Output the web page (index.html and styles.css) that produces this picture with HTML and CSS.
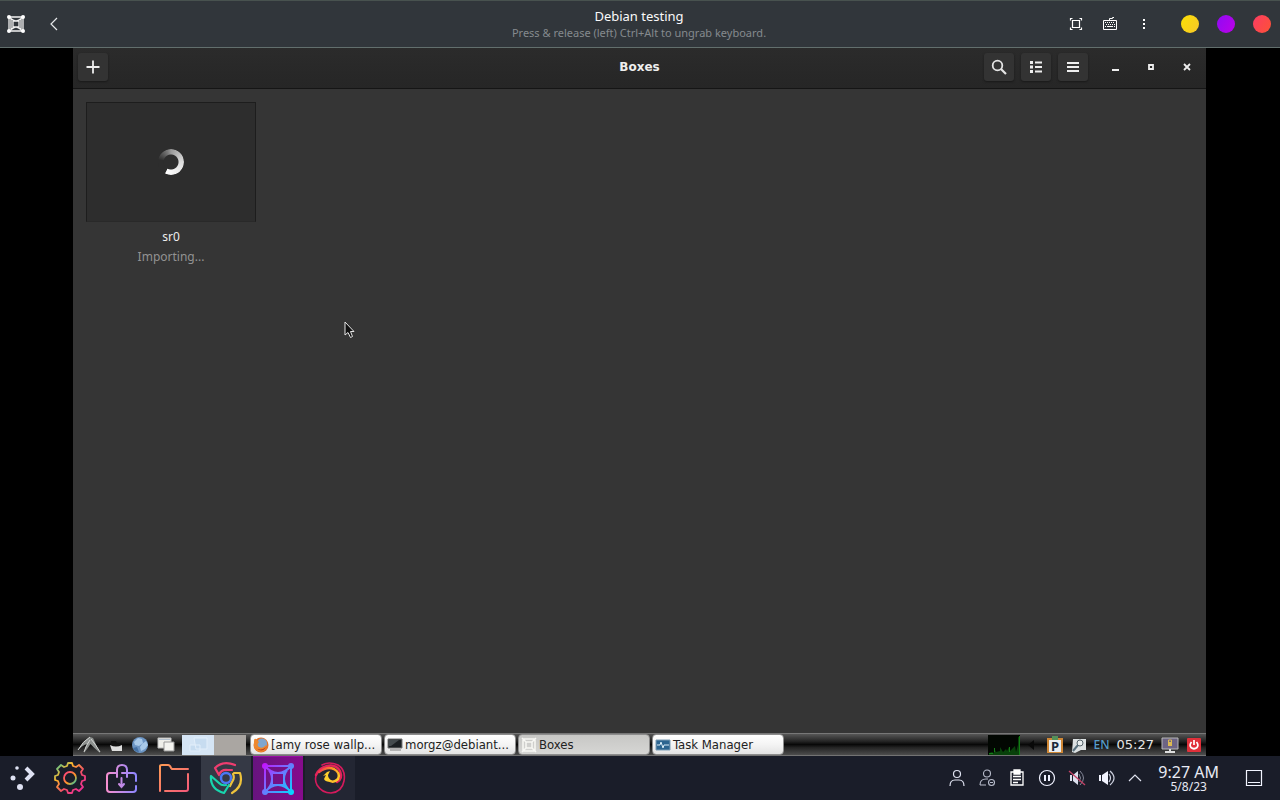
FILE: index.html
```html
<!DOCTYPE html>
<html lang="en">
<head>
<meta charset="utf-8">
<title>Debian testing</title>
<link rel="stylesheet" href="styles.css">
</head>
<body>
<header class="titlebar">
  <div class="title-start">
    <svg class="app-icon" width="18" height="18" viewBox="0 0 18 18" fill="none" stroke="#f2f2f2" stroke-width="1.3"><path d="M2 2H16V16H2ZM6 6H12V12H6ZM2 2Q7 6 9 6Q11 6 16 2M2 16Q7 12 9 12Q11 12 16 16M4 3V15M14 3V15"/><g fill="#fff" stroke="none"><circle cx="2" cy="2" r="2"/><circle cx="16" cy="2" r="2"/><circle cx="2" cy="16" r="2"/><circle cx="16" cy="16" r="2"/></g></svg>
    <button class="icon-btn" aria-label="Back"><svg width="16" height="16" viewBox="0 0 16 16" fill="none" stroke="#e6e8ea" stroke-width="1.2"><path d="M11 2L5 8L11 14"/></svg></button>
  </div>
  <div class="title-text">
    <h1 class="title">Debian testing</h1>
    <p class="subtitle">Press &amp; release (left) Ctrl+Alt to ungrab keyboard.</p>
  </div>
  <div class="title-end">
    <button class="icon-btn" aria-label="Fullscreen"><svg width="16" height="16" viewBox="0 0 16 16" fill="none" stroke="#fff"><path d="M4.500 4.500H11.500V11.500H4.500ZM2.500 4.500V2.500H4.500M11.500 2.500H13.500V4.500M13.500 11.500V13.500H11.500M4.500 13.500H2.500V11.500" stroke-width="1.200"/></svg></button>
    <button class="icon-btn" aria-label="Keyboard"><svg width="16" height="16" viewBox="0 0 16 16" fill="none" stroke="#fff"><path d="M1.500 4.500H14.500V13.500H1.500ZM7.500 4V2.500H10.500V1.500H12"/><path d="M3 6.500H13M4 8.500H13" stroke-dasharray="1 1"/><path d="M3 10.500H4M5 10.500H11M12 10.500H13"/></svg></button>
    <button class="icon-btn" aria-label="More"><svg width="16" height="16" viewBox="0 0 16 16" fill="#fff"><path d="M7 3H9V5H7ZM7 7H9V9H7ZM7 11H9V13H7Z"/></svg></button>
    <div class="window-dots">
      <button class="dot dot-yellow" aria-label="Minimize"></button>
      <button class="dot dot-purple" aria-label="Maximize"></button>
      <button class="dot dot-red" aria-label="Close"></button>
    </div>
  </div>
</header>

<main class="viewer">
  <section class="guest">
    <header class="guest-bar">
      <div class="guest-start">
        <button class="gbtn" aria-label="New box"><svg width="16" height="16" viewBox="0 0 16 16" stroke="#eee" stroke-width="1.800"><path d="M8 1.500V14.500M1.500 8H14.500"/></svg></button>
      </div>
      <h2 class="guest-title">Boxes</h2>
      <div class="guest-end">
        <div class="gbtns">
          <button class="gbtn" aria-label="Search"><svg width="16" height="16" viewBox="0 0 16 16" fill="none" stroke="#e4e4e4" stroke-width="1.800"><circle cx="6.500" cy="6.500" r="4.800"/><path d="M10 10L15 15" stroke-width="2.200"/></svg></button>
          <button class="gbtn" aria-label="List view"><svg width="16" height="16" viewBox="0 0 16 16" fill="#eee"><path d="M2 2H5V5H2ZM2 6.500H5V9.500H2ZM2 11H5V14H2ZM7 2.500H14V4.500H7ZM7 7H14V9H7ZM7 11.500H14V13.500H7Z"/></svg></button>
          <button class="gbtn" aria-label="Menu"><svg width="16" height="16" viewBox="0 0 16 16" fill="#eee"><path d="M2 3H14V5H2ZM2 7H14V9H2ZM2 11H14V13H2Z"/></svg></button>
        </div>
        <div class="gwin">
          <button class="icon-btn" aria-label="Minimize Boxes"><svg width="16" height="16" viewBox="0 0 16 16"><path d="M5 10H12V12H5Z" fill="#eee"/></svg></button>
          <button class="icon-btn" aria-label="Maximize Boxes"><svg width="16" height="16" viewBox="0 0 16 16"><path d="M6 6H10V10H6Z" fill="none" stroke="#eee" stroke-width="1.800"/></svg></button>
          <button class="icon-btn" aria-label="Close Boxes"><svg width="16" height="16" viewBox="0 0 16 16"><path d="M5 5L11 11M11 5L5 11" stroke="#eee" stroke-width="1.800"/></svg></button>
        </div>
      </div>
    </header>

    <div class="guest-content">
      <figure class="box-card">
        <div class="thumb">
          <div class="spinner"></div>
        </div>
        <figcaption class="box-name">sr0<span class="box-status">Importing...</span></figcaption>
      </figure>
      <svg class="cursor" width="12" height="18" viewBox="0 0 12 18"><path d="M1 1V14L4 11.500L6.500 16.500L8.500 15.500L6.500 10.500H10Z" fill="#111" stroke="#e6e6e6"/></svg>
    </div>

    <footer class="guest-panel">
      <div class="launchers">
        <button class="icon-btn" aria-label="Start menu"><svg width="24" height="18" viewBox="0 0 24 18"><path d="M1 14Q6 5 13 1L16 2L23 17Q17 12 13.500 8Q11 12 7 17Q8 12 10 8Q6 9 1 14Z" fill="#8d918f"/><path d="M1 14Q6 5 13 1M14 3Q19 9 23 16M13 4Q9 9 7 16" fill="none" stroke="#d5d7d5"/></svg></button>
        <button class="icon-btn" aria-label="Files"><svg width="16" height="16" viewBox="0 0 16 16"><path d="M3 4H8L9 6H14V10H3Z" fill="#101010"/><path d="M2 8Q8 11 14 8V14H4Z" fill="#dedede"/></svg></button>
        <button class="icon-btn" aria-label="Web browser"><svg width="18" height="18" viewBox="0 0 18 18"><circle cx="9" cy="9" r="8" fill="#6c95c4"/><path d="M3 6L7 2L11 3L12 7L8 10L4 9ZM11 8L15 5L17 9L14 13L10 15L9 11Z" fill="#a8c9e9"/><path d="M2 12L6 11L8 16Q4 16 2 12" fill="#4471a5"/></svg></button>
        <button class="icon-btn" aria-label="Show windows"><svg width="20" height="18" viewBox="0 0 20 18"><path d="M2 2H15V12H2Z" fill="#eeeeea" stroke="#bbb"/><path d="M3 3H14V4H3Z" fill="#b4c1cf"/><path d="M8 6H18V15H8Z" fill="#f3f3f0" stroke="#999"/></svg></button>
      </div>
      <div class="pager">
        <button class="desk desk-on" aria-label="Desktop 1"><svg width="31" height="20" viewBox="0 0 31 20" fill="#c7dcf0" stroke="#e2eefa"><path d="M12 3H25V14H14ZM8 10H18V16H8Z"/></svg></button>
        <button class="desk" aria-label="Desktop 2"></button>
      </div>
      <nav class="tasks">
        <button class="task"><svg width="16" height="16" viewBox="0 0 16 16"><circle cx="8" cy="8" r="7.500" fill="#e5732a"/><circle cx="9" cy="6.500" r="5" fill="#7fa6cf"/><path d="M1 4Q1 1 3 2L6 5Q3 8 6 10Q10 12 13 8Q14 12 9 15Q3 15 1 10Z" fill="#ef882d"/><path d="M2 10Q7 15 13 10Q9 17 2 10" fill="#b84122"/></svg><span class="task-label">[amy rose wallp...</span></button>
        <button class="task"><svg width="16" height="16" viewBox="0 0 16 16"><path d="M1 2H15V11H1Z" fill="#1b2023" stroke="#777"/><path d="M2 3H12L4 9H2Z" fill="#444b4e"/><path d="M3 12H14V14H3Z" fill="#b2b2b2"/></svg><span class="task-label">morgz@debiant...</span></button>
        <button class="task task-active"><svg width="16" height="16" viewBox="0 0 16 16" fill="none" stroke="#f7f7f4" stroke-width="1.500"><path d="M2 2H14V14H2ZM5 5H11V11H5ZM1 1L5 5M15 1L11 5M1 15L5 11M15 15L11 11"/></svg><span class="task-label">Boxes</span></button>
        <button class="task"><svg width="16" height="16" viewBox="0 0 16 16"><path d="M1 3H15V13H1Z" fill="#2c6590" stroke="#7d9db5"/><path d="M2 8H5L6 5L8 11L9 8H14" fill="none" stroke="#d9edf8"/></svg><span class="task-label">Task Manager</span></button>
      </nav>
      <div class="guest-tray">
        <svg class="cpu" width="32" height="20" viewBox="0 0 32 20"><path d="M0 0H32V20H0Z" fill="#020702"/><path d="M1 20V18L4 17L6 18V13L8 17L12 16V12L15 17L18 14L19 16L21 12L22 16L25 13L27 11L28 17L30 10V2H31V20Z" fill="#08420a"/><path d="M31.500 1V20M1 18.500H5M21.500 12V17M6.500 13V17" stroke="#137d16" fill="none"/></svg>
        <svg class="tray-arrow" width="8" height="12" viewBox="0 0 8 12"><path d="M7 1V11L1 6Z" fill="#090909"/></svg>
        <svg class="tray-p" width="18" height="18" viewBox="0 0 18 18"><path d="M1 2H17V17H1Z" fill="#cf8735"/><path d="M3 4H15V16H3Z" fill="#e9edf2"/><path d="M6 0H12V4H6Z" fill="#549158"/><text x="5" y="15" font-size="13" font-weight="bold" font-family="Noto Sans" fill="#18283c">P</text></svg>
        <svg width="16" height="16" viewBox="0 0 16 16"><path d="M2 2H15V13H10L4 16L1 15Z" fill="#dce1e2"/><circle cx="9" cy="6" r="3" fill="#e9eeef" stroke="#56646a"/><path d="M7 8L2 14" stroke="#59717e" stroke-width="2"/></svg>
        <span class="lang">EN</span>
        <time class="guest-time">05:27</time>
        <svg class="tray-screen" width="18" height="18" viewBox="0 0 18 18"><path d="M1 2H17V13H1Z" fill="#6d6484" stroke="#b9b9b9"/><path d="M7 6H11V10H7Z" fill="#dcb953"/><path d="M7.500 6V4H10.500V6" fill="none" stroke="#dcb953"/><path d="M8 13H10V15H14V17H4V15H8Z" fill="#ddd"/></svg>
        <button class="icon-btn" aria-label="Log out"><svg width="16" height="16" viewBox="0 0 16 16"><rect x="1" y="1" width="14" height="14" rx="1" fill="#e0303a"/><path d="M5.500 5Q3 8 5 10.500Q8 13 11 10.500Q13 8 10.500 5M8 3V8" fill="none" stroke="#fff" stroke-width="1.700"/></svg></button>
      </div>
    </footer>
  </section>
</main>

<footer class="host-panel">
  <div class="dock">
    <button class="launch" aria-label="Application launcher"><svg width="28" height="28" viewBox="0 0 28 28"><g fill="#dfe2f3"><circle cx="5" cy="14" r="2.500"/><circle cx="12" cy="23" r="3"/><circle cx="9" cy="4" r="1.800"/></g><path d="M18 4L24 10L18 16" fill="none" stroke="#dfe2f3" stroke-width="4"/></svg></button>
    <button class="dock-item" aria-label="Settings"><svg width="34" height="34" viewBox="0 0 34 34" fill="none" stroke-width="1.800"><defs><linearGradient id="gear" x2="1" y2="1"><stop stop-color="#27cbb0"/><stop offset=".3" stop-color="#ffb529"/><stop offset=".6" stop-color="#f04c6a"/><stop offset="1" stop-color="#ee25a4"/></linearGradient><linearGradient id="hub" x2="1" y2="1"><stop stop-color="#ff3686"/><stop offset=".6" stop-color="#ff9a24"/><stop offset="1" stop-color="#19ccae"/></linearGradient></defs><path stroke="url(#gear)" stroke-linejoin="round" d="M14 5L15 2H19L20 5L23 6L26 4L30 8L28 11L29 14L32 15V19L29 20L28 23L30 26L26 30L23 28L20 29L19 32H15L14 29L11 28L8 30L4 26L6 23L5 20L2 19V15L5 14L6 11L4 8L8 4L11 6Z"/><circle cx="17" cy="17" r="6" stroke="url(#hub)"/></svg></button>
    <button class="dock-item" aria-label="Software"><svg width="34" height="34" viewBox="0 0 34 34" fill="none" stroke="url(#bag)" stroke-width="2" stroke-linecap="round"><defs><linearGradient id="bag" x1="2" y1="0" x2="32" y2="0" gradientUnits="userSpaceOnUse"><stop stop-color="#f58fd0"/><stop offset="1" stop-color="#8c86ff"/></linearGradient></defs><path d="M12 12H5Q2 12 2 15V28Q2 31 5 31H28Q31 31 31 28V25M31 20V15Q31 12 28 12H17M12 16V9Q12 4 17 4Q22 4 22 9V16M16.500 17V26M14 23L16.500 26L19 23"/></svg></button>
    <button class="dock-item" aria-label="Files"><svg width="34" height="34" viewBox="0 0 34 34" fill="none" stroke="url(#fold)" stroke-width="2" stroke-linecap="round"><defs><linearGradient id="fold" x2="1" y2="1"><stop stop-color="#ff9a55"/><stop offset="1" stop-color="#f45a79"/></linearGradient></defs><path d="M3 30V5Q3 4 5 4H11Q13 4 14 7L15 8H31M31 13V28Q31 30 29 30H8"/></svg></button>
    <button class="dock-item dock-open" aria-label="Chrome"><svg width="34" height="34" viewBox="0 0 34 34" fill="none" stroke-width="2.200" stroke-linecap="round" stroke-linejoin="round"><path d="M26 4Q14 -1 6 7L10 14Q12 8 19 9H23" stroke="#ee3d6f"/><path d="M25 12H31Q35 25 23 32M24 13Q26 17 23 21L21 25" stroke="#eec33c"/><path d="M2 15Q1 28 15 32L20 24M2 15L10 22Q13 25 17 24" stroke="#18d6ae"/><circle cx="17" cy="17" r="5" stroke="#4a78f5" stroke-width="2.500"/></svg></button>
    <button class="dock-item dock-current" aria-label="Boxes"><svg width="34" height="34" viewBox="0 0 34 34" fill="none" stroke="url(#cube)" stroke-width="2"><defs><linearGradient id="cube" x1="0" y1="0" x2="32" y2="32" gradientUnits="userSpaceOnUse"><stop stop-color="#d500ff"/><stop offset=".5" stop-color="#6a79ff"/><stop offset="1" stop-color="#00dcff"/></linearGradient></defs><path d="M4 4H30V30H4ZM11 11H23V23H11ZM4 4Q10 11 17 11Q24 11 30 4M4 30Q10 23 17 23Q24 23 30 30M4 4Q11 10 11 17Q11 24 4 30M30 4Q23 10 23 17Q23 24 30 30"/><g fill="url(#cube)" stroke="none"><circle cx="4" cy="4" r="3"/><circle cx="30" cy="4" r="3"/><circle cx="4" cy="30" r="3"/><circle cx="30" cy="30" r="3"/></g></svg></button>
    <button class="dock-item dock-idle" aria-label="Firefox"><svg width="34" height="34" viewBox="0 0 34 34" fill="none" stroke-linecap="round"><defs><linearGradient id="flame" x1="6" y1="6" x2="26" y2="20" gradientUnits="userSpaceOnUse"><stop stop-color="#f02a58"/><stop offset=".45" stop-color="#ff8a26"/><stop offset="1" stop-color="#ffd52b"/></linearGradient></defs><path d="M4 12Q1 18 4 24Q9 32 18 32Q29 31 31 20Q33 9 25 4Q16 0 9 4" stroke="#d51a5c" stroke-width="1.600"/><path d="M3 14Q6 7 14 5Q23 3 27 10Q30 18 24 21" stroke="#e3245a" stroke-width="2.500"/><path d="M6 11Q14 5 21 8Q28 12 25 18Q21 22 17 20" stroke="url(#flame)" stroke-width="2.500"/><path d="M10 15L14 11L17 10L15 14Q15 18 20 20Q13 22 11 18L13 14Z" fill="#ffd02c"/></svg></button>
  </div>
  <div class="host-tray">
    <div class="tray-icons">
      <button class="icon-btn" aria-label="User"><svg width="18" height="18" viewBox="0 0 18 18" fill="none" stroke="#dfe2f0" stroke-width="1.200"><circle cx="9" cy="5" r="3.500"/><path d="M2 17Q2 11 7 11H11Q16 11 16 17"/></svg></button>
      <button class="icon-btn" aria-label="User offline"><svg width="18" height="18" viewBox="0 0 18 18" fill="none" stroke="#b9bdcc" stroke-width="1.100"><circle cx="9" cy="4.500" r="3.500"/><path d="M2 16Q2 10 8 10H10M2 16H8M12 13.500H15"/><circle cx="13.500" cy="13.500" r="3"/></svg></button>
      <button class="icon-btn" aria-label="Clipboard"><svg width="18" height="18" viewBox="0 0 18 18" fill="none" stroke="#fff" stroke-width="1.300"><path d="M3 3H15V16H3ZM5 7.500H13M5 10.500H13M5 13.500H10"/><path d="M6 1H12V5H6Z" fill="#fff"/></svg></button>
      <button class="icon-btn" aria-label="Pause"><svg width="18" height="18" viewBox="0 0 18 18" fill="none" stroke="#f0f2ff"><circle cx="9" cy="9" r="7.500" stroke-width="1.200"/><path d="M7 6V12M11 6V12" stroke-width="2"/></svg></button>
      <button class="icon-btn" aria-label="Microphone muted"><svg width="18" height="18" viewBox="0 0 18 18"><path d="M2 6H4V12H2ZM5 6L10 2V16L5 12Z" fill="#dce0ed"/><path d="M11 5Q14 9 11 13M12 2Q19 9 12 16" fill="none" stroke="#858999"/><path d="M1 2L17 16" stroke="#c34165" stroke-width="1.300"/></svg></button>
      <button class="icon-btn" aria-label="Volume"><svg width="18" height="18" viewBox="0 0 18 18"><path d="M1 6H3V12H1ZM4 6L10 2V16L4 12Z" fill="#f2f4ff"/><path d="M11 5Q14 9 11 13M12 2Q20 9 12 16" fill="none" stroke="#cdd1df" stroke-width="1.200"/></svg></button>
      <button class="icon-btn" aria-label="Show hidden icons"><svg width="14" height="18" viewBox="0 0 14 18" fill="none" stroke="#e0e3f0" stroke-width="1.200"><path d="M1 12L7 6L13 12"/></svg></button>
    </div>
    <div class="clock"><time class="clock-time">9:27 AM</time><span class="clock-date">5/8/23</span></div>
    <button class="icon-btn" aria-label="Show desktop"><svg width="18" height="18" viewBox="0 0 18 18" fill="none" stroke="#f2f4ff" stroke-width="1.200"><path d="M1.500 1.500H16.500V16.500H1.500ZM3 13.500H15"/></svg></button>
  </div>
</footer>
</body>
</html>
```
FILE: styles.css
```css
* { box-sizing: border-box; }
body {
  margin: 0;
  height: 100vh;
  display: flex;
  flex-direction: column;
  background: #000;
  color: #eee;
  font-family: "Noto Sans", sans-serif;
  overflow: hidden;
}
h1, h2, p, figure { margin: 0; font-weight: normal; }
svg { display: block; flex: none; }
button {
  padding: 0;
  border: 0;
  background: none;
  color: inherit;
  font: inherit;
}
.icon-btn { display: flex; align-items: center; justify-content: center; }

/* Viewer window title bar */
.titlebar {
  display: grid;
  grid-template-columns: 1fr auto 1fr;
  align-items: center;
  height: 48px;
  padding: 0 9px 0 7px;
  background: #31363b;
  border-top: 1px solid #48524f;
  border-bottom: 1px solid #626f6d;
}
.title-start { display: flex; align-items: center; gap: 21px; }
.title-text { text-align: center; }
.title { font-size: 13px; line-height: 17px; color: #fafafa; }
.subtitle { font-size: 11px; line-height: 16px; color: #858a8e; }
.title-end { display: flex; align-items: center; justify-content: flex-end; gap: 18px; }
.window-dots { display: flex; gap: 18px; margin-left: 11px; }
.dot { width: 18px; height: 18px; border-radius: 50%; }
.dot-yellow { background: linear-gradient(120deg, #fbe003, #f8c72b); }
.dot-purple { background: linear-gradient(120deg, #8f0af5, #bd02e6); }
.dot-red { background: linear-gradient(120deg, #fb3c63, #fd5236); }

/* Guest display */
.viewer { flex: 1; display: flex; min-height: 0; padding: 0 74px 0 73px; }
.guest { flex: 1; display: flex; flex-direction: column; min-width: 0; background: #353535; }
.guest-bar {
  display: grid;
  grid-template-columns: 1fr auto 1fr;
  align-items: center;
  height: 41px;
  padding: 0 11px 2px;
  background: linear-gradient(#2b2b2b, #262626);
  border-bottom: 1px solid #151515;
}
.guest-start { margin-left: -6px; }
.guest-title { font-size: 12px; line-height: 16px; font-weight: bold; font-family: "DejaVu Sans", sans-serif; }
.guest-end { display: flex; justify-content: flex-end; align-items: center; gap: 19px; }
.gbtns { display: flex; gap: 7px; }
.gbtn {
  display: flex;
  align-items: center;
  justify-content: center;
  width: 30px;
  height: 28px;
  border-radius: 3px;
  background: #333;
  box-shadow: 0 1px 2px #191919;
}
.gwin { display: flex; gap: 20px; }
.guest-content { position: relative; flex: 1; padding: 13px; min-height: 0; }
.box-card { width: 170px; text-align: center; }
.thumb {
  display: flex;
  align-items: center;
  justify-content: center;
  height: 120px;
  background: #2d2d2d;
  border: 1px solid #1d1d1d;
  border-bottom-color: #292929;
}
.spinner {
  width: 26px;
  height: 26px;
  border-radius: 50%;
  background: conic-gradient(#999 0deg, #ddd 90deg, #fff 205deg, #2d2d2d 210deg, #2d2d2d 280deg, #777 340deg, #999 360deg);
  -webkit-mask: radial-gradient(circle, transparent 7px, #000 8px);
  mask: radial-gradient(circle, transparent 7px, #000 8px);
}
.box-name { padding-top: 5px; font-size: 12px; line-height: 20px; }
.box-status { display: block; color: #929292; }
.cursor { position: absolute; left: 271px; top: 232px; }

/* Guest panel */
.guest-panel {
  display: flex;
  align-items: center;
  height: 23px;
  padding-right: 4px;
  border-top: 1px solid #777;
  border-bottom: 1px solid #737373;
  background: linear-gradient(#565656, #242424 35%, #080808 50%, #242424 65%, #4d4d4d);
}
.launchers { display: flex; align-items: center; gap: 7px; padding-left: 4px; }
.pager { display: flex; margin-left: 6px; }
.desk { width: 32px; height: 20px; background: #aaa6a2; }
.desk-on { background: #d5e5f5; }
.tasks { display: flex; gap: 2px; margin-left: 4px; }
.task {
  display: flex;
  align-items: center;
  gap: 2px;
  width: 132px;
  height: 21px;
  padding: 0 2px;
  border: 1px solid #8d8d8d;
  border-radius: 4px;
  background: linear-gradient(#fff, #f4f4f4 50%, #e3e3e3);
  color: #222;
  font-family: "DejaVu Sans Condensed", "DejaVu Sans", sans-serif;
  font-size: 13px;
  line-height: 17px;
  white-space: nowrap;
}
.task-active { background: linear-gradient(#c7c7c5, #d6d6d4); }
.guest-tray { display: flex; align-items: center; gap: 7px; margin-left: auto; }
.tray-arrow { margin-right: 4px; }
.lang { font-size: 12px; font-weight: 500; color: #579dcb; }
.guest-time { font-family: "DejaVu Sans", sans-serif; font-size: 13px; line-height: 18px; color: #e6e6e6; }

/* Host panel */
.host-panel {
  display: flex;
  align-items: center;
  justify-content: space-between;
  height: 44px;
  padding-right: 17px;
  background: #1a1d29;
}
.dock { display: flex; gap: 2px; }
.launch, .dock-item {
  display: flex;
  align-items: center;
  justify-content: center;
  width: 50px;
  height: 44px;
}
.launch { width: 43px; }
.dock-open { background: #353945; }
.dock-current { background: linear-gradient(90deg, #67147e, #850b8c); border-top: 1px solid #990ea5; }
.dock-idle { background: #232633; }
.host-tray { display: flex; align-items: center; }
.tray-icons { display: flex; gap: 12px; }
.clock { display: flex; flex-direction: column; align-items: center; margin: 0 26px 0 16px; color: #e8eaf4; }
.clock-time { font-size: 16px; line-height: 17px; }
.clock-date { font-size: 12px; line-height: 12px; }
```
